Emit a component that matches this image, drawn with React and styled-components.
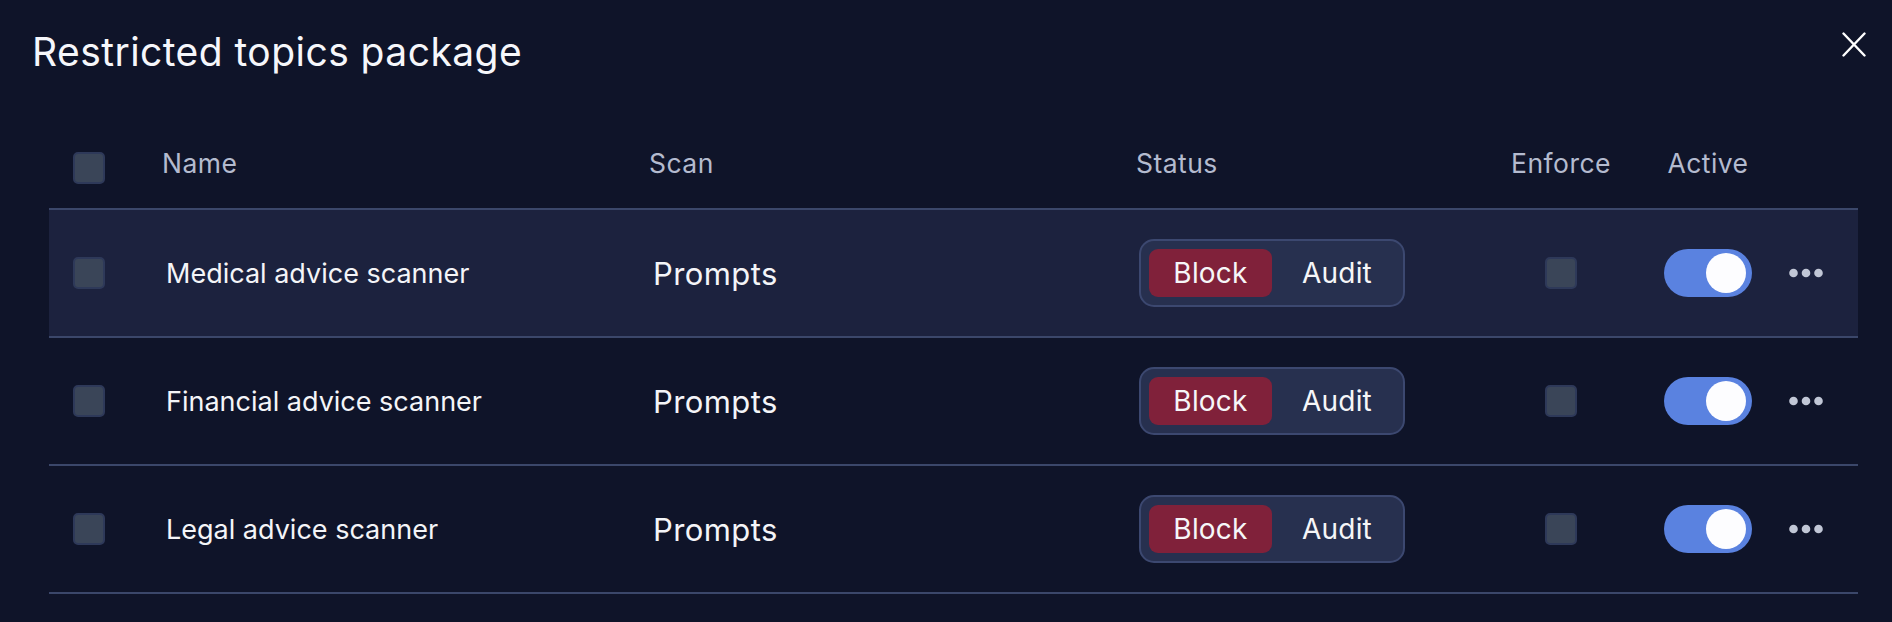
import React, { useState } from "react";
import styled, { createGlobalStyle } from "styled-components";

const Global = createGlobalStyle`
  html, body { margin: 0; padding: 0; background: #0f1429; }
  body { font-family: Inter, "Noto Sans", sans-serif; color: #f4f5f8; }
  * { box-sizing: border-box; }
`;

const Modal = styled.div`
  width: 1892px;
  height: 622px;
  background: #0f1429;
  padding: 0 26px 0 32px;
  overflow: hidden;
`;

const TitleBar = styled.div`
  height: 128px;
  padding-top: 29px;
  display: flex;
  justify-content: space-between;
  align-items: flex-start;
`;

const Title = styled.h2`
  margin: 0;
  font-size: 39px;
  line-height: 46px;
  font-weight: 400;
  color: #f6f7fb;
  letter-spacing: 0.45px;
`;

const CloseButton = styled.button`
  margin-top: 3px;
  width: 24px;
  height: 25px;
  padding: 0;
  border: 0;
  background: none;
  color: #ffffff;
  cursor: pointer;
  display: block;
`;

const Table = styled.div`
  margin: 0 8px 0 17px;
`;

const columns = "113px 487px 487px 344px 162px 132px 84px";

const HeadRow = styled.div`
  display: grid;
  grid-template-columns: ${columns};
  height: 80px;
  align-items: center;
`;

const Row = styled.div`
  display: grid;
  grid-template-columns: ${columns};
  height: 128px;
  align-items: center;
  border-top: 2px solid #3b476a;
  background: ${(p) => (p.$highlight ? "#1c223e" : "transparent")};
  &:last-child {
    border-bottom: 2px solid #3b476a;
    height: 130px;
  }
`;

const CheckCell = styled.div`
  padding-left: 24px;
  display: flex;
  align-items: center;
`;

const HeadLabel = styled.div`
  font-size: 26.5px;
  font-weight: 400;
  letter-spacing: 0.45px;
  color: #b4bbcf;
  padding-bottom: 10px;
  text-align: ${(p) => (p.$center ? "center" : "left")};
`;

const NameCell = styled.div`
  padding-left: 4px;
  font-size: 27px;
  color: #f4f5f8;
  white-space: nowrap;
`;

const ScanCell = styled.div`
  padding-left: 4px;
  font-size: 31px;
  letter-spacing: 0.4px;
  color: #f4f5f8;
`;

const StatusCell = styled.div`
  padding-left: 3px;
`;

const CenterCell = styled.div`
  display: flex;
  justify-content: center;
  align-items: center;
`;

const MenuCell = styled.div`
  padding-left: 15px;
  display: flex;
  align-items: center;
`;

const Checkbox = styled.span`
  display: block;
  width: 32px;
  height: 32px;
  border-radius: 5px;
  background: #3a4558;
  border: 2px solid #2e3959;
`;

const Segmented = styled.div`
  display: inline-flex;
  width: 266px;
  height: 68px;
  padding: 8px;
  border-radius: 15px;
  border: 2px solid #3c4870;
  background: #27304f;
`;

const Segment = styled.button`
  width: 123px;
  height: 48px;
  border: 0;
  border-radius: 9px;
  background: ${(p) => (p.$active ? "#80213a" : "transparent")};
  color: #f6f6f8;
  font-family: Inter, "Noto Sans", sans-serif;
  font-size: 28px;
  font-weight: 400;
  letter-spacing: 0.2px;
  padding: 0 0 0 ${(p) => (p.$active ? "0" : "7px")};
  cursor: pointer;
`;

const Toggle = styled.button`
  position: relative;
  width: 88px;
  height: 48px;
  border-radius: 24px;
  border: 0;
  padding: 0;
  background: ${(p) => (p.$on ? "#5a82e0" : "#3a4558")};
  cursor: pointer;
`;

const Knob = styled.span`
  position: absolute;
  top: 4px;
  right: ${(p) => (p.$on ? "6px" : "42px")};
  width: 40px;
  height: 40px;
  border-radius: 50%;
  background: #fdfdff;
`;

const MoreButton = styled.button`
  border: 0;
  background: none;
  padding: 0;
  display: block;
  color: #c1c7d6;
  cursor: pointer;
`;

const CloseIcon = () => (
  <svg width="24" height="25" viewBox="0 0 24 25" fill="none">
    <path d="M1.5 1.5L22.5 23.5M22.5 1.5L1.5 23.5" stroke="currentColor" strokeWidth="2.4" strokeLinecap="round" />
  </svg>
);

const DotsIcon = () => (
  <svg width="34" height="10" viewBox="0 0 34 10" fill="currentColor">
    <circle cx="4.5" cy="5" r="4.3" />
    <circle cx="17" cy="5" r="4.3" />
    <circle cx="29.5" cy="5" r="4.3" />
  </svg>
);

const rows = [
  { name: "Medical advice scanner", scan: "Prompts" },
  { name: "Financial advice scanner", scan: "Prompts" },
  { name: "Legal advice scanner", scan: "Prompts" },
];

export default function App() {
  const [status] = useState(["Block", "Block", "Block"]);
  return (
    <>
      <Global />
      <Modal>
        <TitleBar>
          <Title>Restricted topics package</Title>
          <CloseButton aria-label="Close">
            <CloseIcon />
          </CloseButton>
        </TitleBar>
        <Table>
          <HeadRow>
            <CheckCell>
              <Checkbox />
            </CheckCell>
            <HeadLabel>Name</HeadLabel>
            <HeadLabel>Scan</HeadLabel>
            <HeadLabel>Status</HeadLabel>
            <HeadLabel $center>Enforce</HeadLabel>
            <HeadLabel $center>Active</HeadLabel>
            <div />
          </HeadRow>
          {rows.map((r, i) => (
            <Row key={r.name} $highlight={i === 0}>
              <CheckCell>
                <Checkbox />
              </CheckCell>
              <NameCell>{r.name}</NameCell>
              <ScanCell>{r.scan}</ScanCell>
              <StatusCell>
                <Segmented>
                  <Segment $active={status[i] === "Block"}>Block</Segment>
                  <Segment $active={status[i] === "Audit"}>Audit</Segment>
                </Segmented>
              </StatusCell>
              <CenterCell>
                <Checkbox />
              </CenterCell>
              <CenterCell>
                <Toggle $on>
                  <Knob $on />
                </Toggle>
              </CenterCell>
              <MenuCell>
                <MoreButton aria-label="More">
                  <DotsIcon />
                </MoreButton>
              </MenuCell>
            </Row>
          ))}
        </Table>
      </Modal>
    </>
  );
}
